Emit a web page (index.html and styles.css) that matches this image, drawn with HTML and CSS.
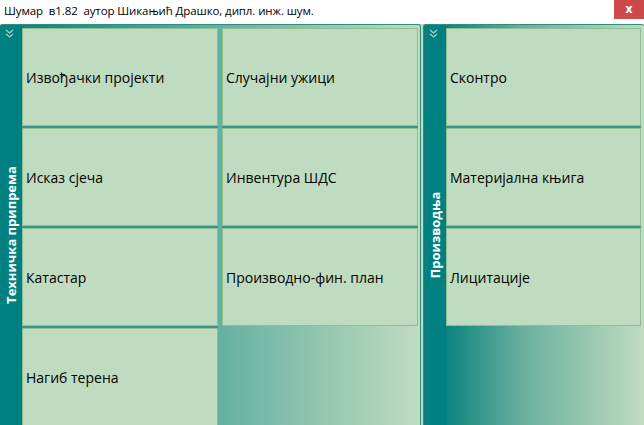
FILE: index.html
```html
<!DOCTYPE html>
<html>
<head>
<meta charset="utf-8">
<link rel="stylesheet" href="styles.css">
</head>
<body>
<div class="app">
  <div class="titlebar">
    <span class="title">Шумар&nbsp; в1.82&nbsp; аутор Шикањић Драшко, дипл. инж. шум.</span>
    <span class="close">x</span>
  </div>
  <div class="main">
    <section class="panel panel-a">
      <div class="strip">
        <svg class="chev" width="9" height="9" viewBox="0 0 9 9"><path d="M1 1 L4.5 4 L8 1 M1 5 L4.5 8 L8 5" fill="none" stroke="#a6d3cd" stroke-width="1.2"/></svg>
        <div class="strip-label"><span>Техничка припрема</span></div>
      </div>
      <div class="tiles">
        <div class="tile">Извођачки пројекти</div>
        <div class="tile">Случајни ужици</div>
        <div class="tile">Исказ сјеча</div>
        <div class="tile">Инвентура ШДС</div>
        <div class="tile">Катастар</div>
        <div class="tile">Производно-фин. план</div>
        <div class="tile">Нагиб терена</div>
      </div>
    </section>
    <div class="sep"></div>
    <section class="panel panel-b">
      <div class="strip">
        <svg class="chev" width="9" height="9" viewBox="0 0 9 9"><path d="M1 1 L4.5 4 L8 1 M1 5 L4.5 8 L8 5" fill="none" stroke="#a6d3cd" stroke-width="1.2"/></svg>
        <div class="strip-label"><span>Производња</span></div>
      </div>
      <div class="tiles">
        <div class="tile">Сконтро</div>
        <div class="tile">Материјална књига</div>
        <div class="tile">Лицитације</div>
      </div>
    </section>
  </div>
</div>
</body>
</html>
```
FILE: styles.css
```css
* { box-sizing: border-box; }
html, body { margin: 0; padding: 0; }
body {
  width: 644px;
  height: 425px;
  overflow: hidden;
  background: #ffffff;
  font-family: "Open Sans", "Noto Sans", "DejaVu Sans", sans-serif;
}
.app { width: 644px; height: 425px; display: flex; flex-direction: column; }
.titlebar {
  height: 24px;
  display: flex;
  align-items: flex-start;
  justify-content: space-between;
  background: #ffffff;
}
.title {
  font-size: 11.5px;
  line-height: 21px;
  padding-left: 4px;
  color: #000;
  letter-spacing: -0.1px;
}
.close {
  width: 30px;
  height: 19px;
  background: #cc4a4a;
  color: #fff;
  font-weight: bold;
  font-size: 12px;
  line-height: 17px;
  text-align: center;
}
.main {
  flex: 1;
  display: flex;
  background: #c0dcc0;
}
.panel {
  display: flex;
  height: 401px;
  border-radius: 3px 3px 0 0;
  background: linear-gradient(to right, #008080 0%, #c0dcc0 100%);
  overflow: hidden;
}
.panel-a {
  width: 421px;
  border-right: 1px solid #2f8d83;
  border-top: 1px solid #2f8d83;
}
.panel-b {
  width: 221px;
  border-left: 1px solid #2f8d83;
  border-top: 1px solid #2f8d83;
  background: linear-gradient(to right, #008080 0%, #0a837e 10%, #6ab09f 45%, #c0dcc0 100%);
}
.sep { width: 2px; background: #c0dcc0; }
.strip {
  width: 22px;
  flex: none;
  background: #008080;
  display: flex;
  flex-direction: column;
  align-items: center;
}
.chev { margin-top: 4px; margin-left: -3px; flex: none; }
.strip-label {
  flex: 1;
  display: flex;
  align-items: center;
  justify-content: center;
  width: 22px;
  padding-top: 6px;
}
.strip-label span {
  transform: rotate(-90deg);
  white-space: nowrap;
  color: #ffffff;
  font-weight: bold;
  font-size: 13px;
  line-height: 16px;
  display: block;
}
.tiles {
  flex: 1;
  display: grid;
  grid-template-columns: 196px 196px;
  grid-auto-rows: 98px;
  column-gap: 4px;
  row-gap: 2px;
  padding: 3px 0 0 0;
  align-content: start;
}
.panel-b .tiles {
  grid-template-columns: 195px;
}
.tile {
  background: #c0dcc0;
  border: 1px solid #8fbf90;
  box-shadow: 0 -2px 0 0 #3a968b;
  font-size: 14px;
  color: #000;
  display: flex;
  align-items: center;
  padding-left: 3px;
  padding-top: 1px;
}
.panel-a .tile:nth-child(1),
.panel-a .tile:nth-child(2),
.panel-b .tile:nth-child(1) { box-shadow: none; }
```
